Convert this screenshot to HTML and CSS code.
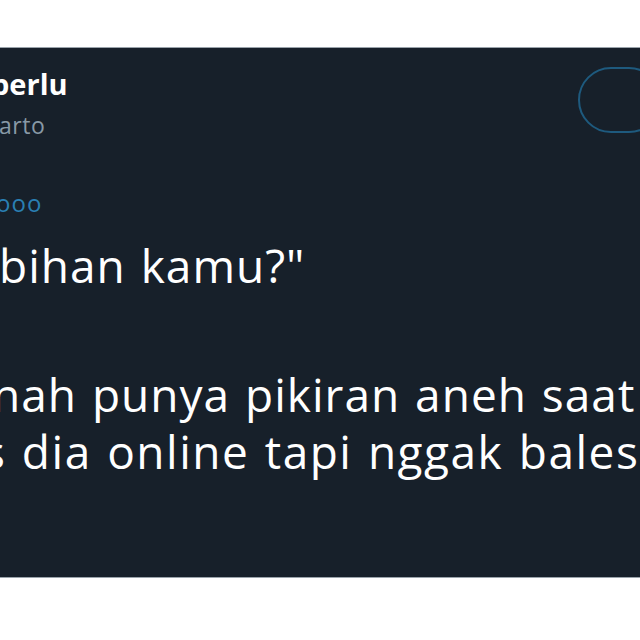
FILE: index.html
```html
<!DOCTYPE html>
<html lang="id">
<head>
<meta charset="utf-8">
<title>Tweet</title>
<link rel="stylesheet" href="styles.css">
</head>
<body>
<div class="stage">
  <div class="card">
    <div class="header">
      <div class="names">
        <div class="name">perlu</div>
        <div class="handle">arto</div>
      </div>
      <div class="follow"></div>
    </div>
    <div class="reply">ooo</div>
    <div class="text">
      <div class="line l1">bihan kamu?"</div>
      <div class="line l2">nah punya pikiran aneh saat</div>
      <div class="line l3">s dia online tapi nggak bales</div>
    </div>
  </div>
</div>
</body>
</html>
```
FILE: styles.css
```css
html, body {
  margin: 0;
  padding: 0;
  background: #ffffff;
}
.stage {
  width: 640px;
  height: 640px;
  padding-top: 47px;
  box-sizing: border-box;
}
.card {
  height: 531px;
  background: #17202a;
  border-top: 1px solid #9aa3ab;
  border-bottom: 1px solid #9aa3ab;
  box-sizing: border-box;
  overflow: hidden;
  font-family: "Open Sans", "Noto Sans", sans-serif;
  color: #ffffff;
}
.header {
  display: flex;
  justify-content: space-between;
  align-items: flex-start;
  padding-top: 16px;
}
.names {
  display: flex;
  flex-direction: column;
}
.name {
  font-weight: 700;
  font-size: 29px;
  line-height: 40px;
  margin-left: -9px;
}
.handle {
  color: #8899a6;
  font-size: 23px;
  line-height: 30px;
  margin-top: 6px;
  margin-left: -1px;
  letter-spacing: 0.5px;
}
.follow {
  width: 80px;
  height: 62px;
  margin-top: 3px;
  margin-right: -22px;
  border: 2px solid #1e5a7e;
  border-radius: 33px;
}
.reply {
  color: #2a7fb3;
  font-size: 24px;
  line-height: 30px;
  letter-spacing: 1px;
  margin-top: 48px;
  margin-left: -4px;
}
.text {
  font-size: 46px;
  line-height: 57px;
  letter-spacing: 1px;
  word-spacing: 2px;
  margin-top: 19px;
}
.line {
  white-space: nowrap;
}
.l1 { margin-left: -1px; }
.l2 { margin-top: 72px; margin-left: -8px; }
.l3 { margin-left: -17px; letter-spacing: 1.5px; }
```
